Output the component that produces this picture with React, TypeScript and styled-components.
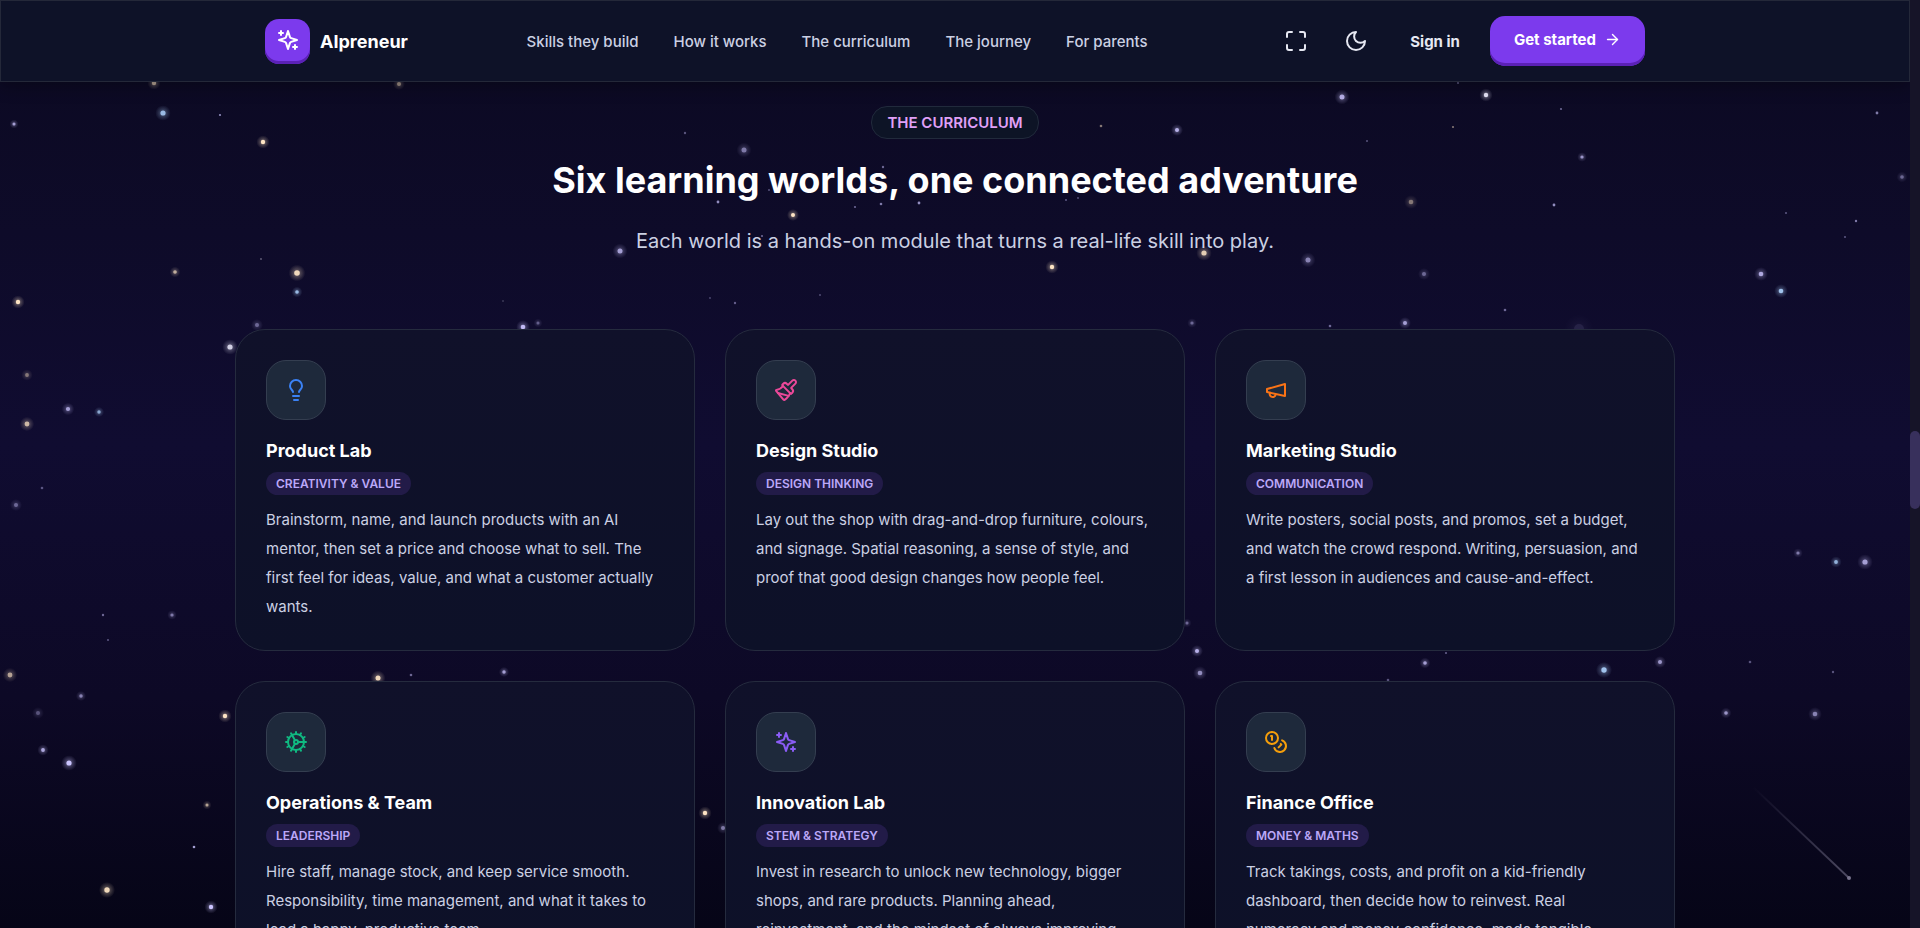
import React from "react";
import styled, { createGlobalStyle } from "styled-components";
import { ArrowRight, Cog, Coins, Lightbulb, Maximize, Paintbrush } from "lucide-react";

const GlobalStyle = createGlobalStyle`
  *, *::before, *::after { box-sizing: border-box; }
  body {
    margin: 0;
    background: #0b0824;
    color: #cbd0e3;
    font-family: Inter, "Liberation Sans", sans-serif;
    font-size: 15px;
  }
  h2, h3, p { margin: 0; }
  a { color: inherit; text-decoration: none; }
`;

const Shell = styled.div`
  position: relative;
  display: flex;
  height: 100vh;
  overflow: hidden;
  background: linear-gradient(180deg, #0b0921 0%, #0e0b29 25%, #100c31 48%, #0d0926 75%, #060517 100%);
`;

const Page = styled.div`
  position: relative;
  flex: 1;
  min-width: 0;
  overflow: hidden;
`;

const Rail = styled.div`
  width: 10px;
  padding-top: 431px;
  background: #161428;
`;

const Thumb = styled.div`
  height: 78px;
  border-radius: 5px;
  background: #38305c;
`;

const SkyCanvas = styled.svg`
  position: absolute;
  inset: 0;
  width: 100%;
  height: 100%;
`;

const Header = styled.header`
  position: relative;
  border: 1px solid #242839;
  background: #0e1228;
  box-shadow: 0 4px 16px rgba(0, 0, 0, 0.3);
`;

const HeaderInner = styled.div`
  display: flex;
  align-items: center;
  justify-content: space-between;
  max-width: 1440px;
  height: 80px;
  margin: 0 auto;
  padding: 0 30px;
`;

const Brand = styled.a`
  display: flex;
  align-items: center;
  gap: 10px;
  color: #fff;
  font-size: 18px;
  font-weight: 700;
`;

const BrandMark = styled.span`
  display: grid;
  place-items: center;
  width: 45px;
  height: 45px;
  padding-bottom: 3px;
  border-radius: 14px;
  background: #7c3aed;
  box-shadow: inset 0 -3px 0 #5b21b6;
`;

const Nav = styled.nav`
  display: flex;
  gap: 35px;
  font-weight: 500;
`;

const Actions = styled.div`
  display: flex;
  align-items: center;
  color: #e6e8f2;
`;

const IconButton = styled.button`
  display: grid;
  place-items: center;
  width: 60px;
  height: 50px;
  padding: 0;
  border: 0;
  background: none;
  color: inherit;
`;

const SignIn = styled.a`
  padding: 0 30px 0 24px;
  font-weight: 700;
`;

const StartButton = styled.button`
  display: flex;
  align-items: center;
  gap: 8px;
  height: 50px;
  padding: 0 24px 3px;
  border: 0;
  border-radius: 15px;
  background: #7c3aed;
  box-shadow: inset 0 -3px 0 #5b21b6;
  color: #fff;
  font: inherit;
  font-weight: 700;
`;

const Section = styled.main`
  position: relative;
  max-width: 1440px;
  margin: 0 auto;
`;

const Intro = styled.div`
  display: flex;
  flex-direction: column;
  align-items: center;
  padding: 24px 0 70px;
`;

const Eyebrow = styled.span`
  padding: 0 15px;
  border: 1px solid #212a3c;
  border-radius: 16px;
  background: #0d1426;
  color: #e0a0f8;
  font-size: 15px;
  font-weight: 600;
  line-height: 31px;
`;

const Heading = styled.h2`
  margin-top: 12px;
  color: #fff;
  font-size: 36px;
  font-weight: 700;
  line-height: 58px;
`;

const Lead = styled.p`
  margin-top: 14px;
  font-size: 20px;
  line-height: 36px;
`;

const Grid = styled.div`
  display: grid;
  grid-template-columns: repeat(3, minmax(0, 1fr));
  gap: 30px;
`;

const Card = styled.article`
  padding: 30px 30px 29px;
  border: 1px solid #252b3e;
  border-radius: 30px;
  background: linear-gradient(180deg, #10112a, #0d1128);
`;

const Tile = styled.div<{ $tint: string }>`
  display: grid;
  place-items: center;
  width: 60px;
  height: 60px;
  border: 1px solid #343e50;
  border-radius: 20px;
  background: #1e293b;
  color: ${(p) => p.$tint};
`;

const CardTitle = styled.h3`
  margin-top: 16px;
  color: #fff;
  font-size: 18px;
  font-weight: 700;
  line-height: 30px;
`;

const Tag = styled.p`
  width: fit-content;
  margin: 6px 0 10px;
  padding: 0 10px;
  border-radius: 12px;
  background: #221b48;
  color: #bba8f8;
  font-size: 12px;
  font-weight: 600;
  line-height: 23px;
`;

const CardText = styled.p`
  line-height: 29px;
`;

function Glyph({ size = 24, children }: { size?: number; children: React.ReactNode }) {
  return (
    <svg
      width={size}
      height={size}
      viewBox="0 0 24 24"
      fill="none"
      stroke="currentColor"
      strokeWidth="2"
      strokeLinecap="round"
      strokeLinejoin="round"
      aria-hidden="true"
    >
      {children}
    </svg>
  );
}

const Sparkles = () => (
  <Glyph>
    <path d="m12 3-1.912 5.813a2 2 0 0 1-1.275 1.275L3 12l5.813 1.912a2 2 0 0 1 1.275 1.275L12 21l1.912-5.813a2 2 0 0 1 1.275-1.275L21 12l-5.813-1.912a2 2 0 0 1-1.275-1.275L12 3Z" />
    <path d="M5 3v4M19 17v4M3 5h4M17 19h4" />
  </Glyph>
);

const Megaphone = () => (
  <Glyph>
    <path d="m3 11 18-5v12L3 14v-3z" />
    <path d="M11.6 16.8a3 3 0 1 1-5.8-1.6" />
  </Glyph>
);

const Moon = () => (
  <Glyph>
    <path d="M12 3a6 6 0 0 0 9 9 9 9 0 1 1-9-9Z" />
  </Glyph>
);

type Tone = "white" | "lav" | "blue" | "warm";
const tones: Record<Tone, string> = {
  white: "#e8e6f8",
  lav: "#cbc4ff",
  blue: "#a9cdf8",
  warm: "#fde4c4",
};

// x, y, radius, tone, brightness
const stars: [number, number, number, Tone, number][] = [
  [154, 83, 2.2, "warm", 0.7], [399, 84, 2, "warm", 0.6], [163, 113, 2.6, "blue", 0.9], [14, 124, 1.5, "lav", 0.8],
  [220, 115, 1.1, "lav", 0.7], [263, 142, 2.2, "warm", 1], [261, 259, 0.9, "white", 0.4], [175, 272, 1.8, "warm", 0.75],
  [297, 273, 2.8, "warm", 0.95], [297, 292, 1.8, "blue", 0.9], [18, 302, 2.2, "warm", 1], [503, 301, 0.8, "white", 0.35],
  [257, 325, 2, "lav", 0.5], [523, 327, 2.3, "lav", 0.95], [538, 323, 1.5, "lav", 0.45], [230, 347, 2.6, "white", 0.9],
  [27, 375, 1.9, "warm", 0.5], [68, 409, 2.1, "lav", 0.8], [99, 412, 1.7, "blue", 0.8], [27, 424, 2.4, "warm", 0.8],
  [42, 488, 1.3, "lav", 0.4], [16, 505, 2, "lav", 0.5], [103, 615, 1.2, "lav", 0.5], [172, 615, 1.6, "lav", 0.6],
  [108, 640, 1.1, "lav", 0.4], [10, 675, 2.4, "warm", 0.7], [81, 696, 1.7, "lav", 0.65], [38, 713, 2, "lav", 0.4],
  [43, 750, 1.9, "lav", 0.85], [69, 763, 2.6, "lav", 1], [225, 716, 2.2, "warm", 1], [207, 805, 1.5, "warm", 0.7],
  [194, 847, 1.3, "lav", 0.8], [107, 890, 2.7, "warm", 0.95], [211, 907, 2.2, "lav", 1], [378, 678, 2.5, "warm", 0.95],
  [411, 675, 1.3, "lav", 0.5], [504, 672, 1.7, "lav", 0.8], [705, 813, 2.2, "warm", 1], [723, 828, 2, "lav", 0.6],
  [685, 133, 1.2, "lav", 0.4], [744, 150, 2.5, "lav", 0.6], [1101, 126, 1.3, "warm", 0.5], [1177, 130, 2, "lav", 0.9],
  [1342, 97, 2.5, "lav", 0.9], [1367, 141, 1, "lav", 0.4], [883, 167, 1.2, "lav", 0.5], [769, 190, 1, "lav", 0.4],
  [718, 202, 1.4, "lav", 0.7], [855, 207, 1.1, "lav", 0.5], [881, 204, 1.3, "lav", 0.6], [919, 203, 1.4, "lav", 0.7],
  [1066, 200, 1.1, "lav", 0.4], [1078, 198, 0.9, "lav", 0.4], [793, 215, 2, "warm", 1], [762, 236, 1.1, "lav", 0.5],
  [620, 251, 2.5, "lav", 0.8], [1052, 267, 2.2, "warm", 1], [1204, 253, 2.6, "warm", 0.9], [1308, 260, 2.5, "lav", 0.65],
  [710, 298, 0.9, "lav", 0.35], [735, 303, 1.2, "lav", 0.45], [820, 295, 1, "lav", 0.35], [1192, 323, 1.6, "lav", 0.5],
  [1187, 623, 1.5, "lav", 0.5], [1458, 83, 1.1, "lav", 0.4], [1486, 95, 2.2, "white", 1], [1561, 109, 1.1, "lav", 0.5],
  [1453, 127, 1.1, "warm", 0.5], [1582, 157, 1.6, "lav", 0.75], [1877, 113, 1.4, "lav", 0.6], [1902, 177, 1.8, "lav", 0.5],
  [1411, 202, 2.3, "warm", 0.5], [1554, 205, 1.4, "lav", 0.7], [1786, 213, 1.1, "lav", 0.4], [1856, 221, 1.2, "lav", 0.6],
  [1845, 237, 1.1, "lav", 0.4], [1424, 274, 2, "lav", 0.5], [1761, 274, 2.3, "lav", 0.85], [1781, 291, 2.3, "blue", 0.95],
  [1505, 310, 1.3, "lav", 0.5], [1405, 323, 2, "lav", 0.8], [1330, 326, 1.3, "lav", 0.5], [1579, 329, 5, "lav", 0.12],
  [1798, 553, 1.6, "lav", 0.6], [1836, 562, 1.9, "blue", 0.85], [1865, 562, 2.6, "lav", 0.8], [1197, 651, 2, "lav", 0.9],
  [1200, 673, 2.3, "lav", 0.7], [1425, 663, 1.8, "lav", 0.8], [1388, 680, 1.3, "lav", 0.4], [1446, 653, 1.1, "lav", 0.45],
  [1604, 670, 2.7, "blue", 0.95], [1660, 662, 2, "lav", 0.75], [1750, 662, 1.3, "lav", 0.4], [1833, 672, 1.2, "lav", 0.4],
  [1726, 713, 1.8, "lav", 0.75], [1815, 714, 2.3, "lav", 0.65],
];

function Sky() {
  return (
    <SkyCanvas aria-hidden="true">
      <defs>
        {(Object.keys(tones) as Tone[]).map((tone) => (
          <radialGradient key={tone} id={`halo-${tone}`}>
            <stop offset="0" stopColor={tones[tone]} stopOpacity="0.5" />
            <stop offset="0.6" stopColor={tones[tone]} stopOpacity="0.18" />
            <stop offset="1" stopColor={tones[tone]} stopOpacity="0" />
          </radialGradient>
        ))}
        <linearGradient id="trail" x1="0" y1="0" x2="1" y2="1">
          <stop offset="0" stopColor="#b5b0cc" stopOpacity="0" />
          <stop offset="1" stopColor="#b5b0cc" stopOpacity="0.4" />
        </linearGradient>
      </defs>
      {stars.map(([x, y, r, tone, glow]) => (
        <g key={`${x}-${y}`} opacity={glow}>
          {r > 1.4 && <circle cx={x} cy={y} r={r * 3} fill={`url(#halo-${tone})`} />}
          <circle cx={x} cy={y} r={r} fill={tones[tone]} />
        </g>
      ))}
      <line x1="1753" y1="787" x2="1849" y2="878" stroke="url(#trail)" strokeWidth="1.8" />
      <circle cx="1849" cy="878" r="2" fill="#77738c" />
    </SkyCanvas>
  );
}

const links = [
  { href: "#skills", label: "Skills they build" },
  { href: "#how", label: "How it works" },
  { href: "#curriculum", label: "The curriculum" },
  { href: "#journey", label: "The journey" },
  { href: "#parents", label: "For parents" },
];

const worlds = [
  {
    title: "Product Lab",
    tag: "CREATIVITY & VALUE",
    tint: "#3b82f6",
    icon: <Lightbulb size={24} />,
    text: "Brainstorm, name, and launch products with an AI mentor, then set a price and choose what to sell. The first feel for ideas, value, and what a customer actually wants.",
  },
  {
    title: "Design Studio",
    tag: "DESIGN THINKING",
    tint: "#ec4899",
    icon: <Paintbrush size={24} />,
    text: "Lay out the shop with drag-and-drop furniture, colours, and signage. Spatial reasoning, a sense of style, and proof that good design changes how people feel.",
  },
  {
    title: "Marketing Studio",
    tag: "COMMUNICATION",
    tint: "#f97316",
    icon: <Megaphone />,
    text: "Write posters, social posts, and promos, set a budget, and watch the crowd respond. Writing, persuasion, and a first lesson in audiences and cause-and-effect.",
  },
  {
    title: "Operations & Team",
    tag: "LEADERSHIP",
    tint: "#10b981",
    icon: <Cog size={24} />,
    text: "Hire staff, manage stock, and keep service smooth. Responsibility, time management, and what it takes to lead a happy, productive team.",
  },
  {
    title: "Innovation Lab",
    tag: "STEM & STRATEGY",
    tint: "#8b5cf6",
    icon: <Sparkles />,
    text: "Invest in research to unlock new technology, bigger shops, and rare products. Planning ahead, reinvestment, and the mindset of always improving.",
  },
  {
    title: "Finance Office",
    tag: "MONEY & MATHS",
    tint: "#f59e0b",
    icon: <Coins size={24} />,
    text: "Track takings, costs, and profit on a kid-friendly dashboard, then decide how to reinvest. Real numeracy\u00a0and money confidence, made tangible.",
  },
];

export default function App() {
  return (
    <Shell>
      <GlobalStyle />
      <Page>
        <Sky />
        <Header>
          <HeaderInner>
            <Brand href="#">
              <BrandMark>
                <Sparkles />
              </BrandMark>
              AIpreneur
            </Brand>
            <Nav>
              {links.map((link) => (
                <a key={link.href} href={link.href}>
                  {link.label}
                </a>
              ))}
            </Nav>
            <Actions>
              <IconButton aria-label="Full screen">
                <Maximize size={24} />
              </IconButton>
              <IconButton aria-label="Dark mode">
                <Moon />
              </IconButton>
              <SignIn href="#sign-in">Sign in</SignIn>
              <StartButton>
                Get started <ArrowRight size={17} />
              </StartButton>
            </Actions>
          </HeaderInner>
        </Header>
        <Section>
          <Intro>
            <Eyebrow>THE CURRICULUM</Eyebrow>
            <Heading>Six learning worlds, one connected adventure</Heading>
            <Lead>Each world is a hands-on module that turns a real-life skill into play.</Lead>
          </Intro>
          <Grid>
            {worlds.map((world) => (
              <Card key={world.title}>
                <Tile $tint={world.tint}>{world.icon}</Tile>
                <CardTitle>{world.title}</CardTitle>
                <Tag>{world.tag}</Tag>
                <CardText>{world.text}</CardText>
              </Card>
            ))}
          </Grid>
        </Section>
      </Page>
      <Rail aria-hidden="true">
        <Thumb />
      </Rail>
    </Shell>
  );
}
